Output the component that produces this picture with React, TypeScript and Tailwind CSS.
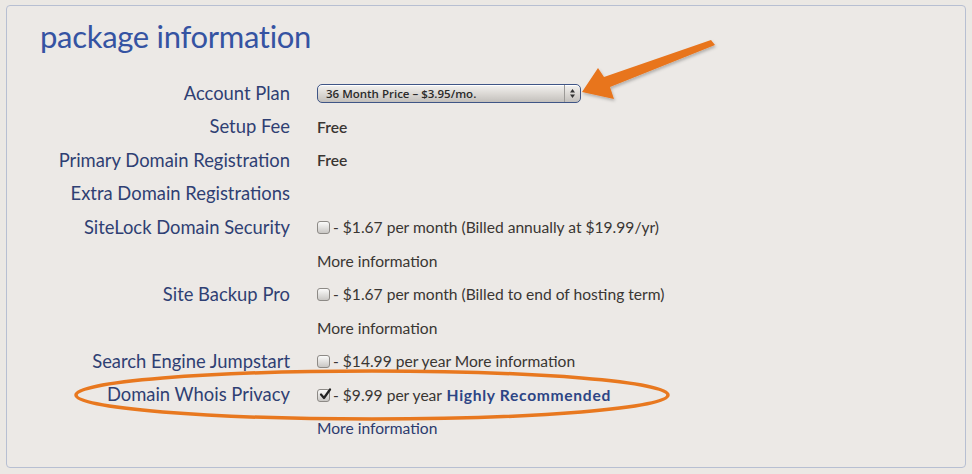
import React from "react";

const font = { fontFamily: "Lato, 'Open Sans', sans-serif" };

type Row = { label?: string; value?: React.ReactNode };

function Checkbox({ checked = false }: { checked?: boolean }) {
  return (
    <span className="relative inline-flex w-[13px] h-[13px] shrink-0 rounded-[3px] border border-[#8d8a86] bg-gradient-to-b from-[#fbfbfa] to-[#c9c7c4] items-center justify-center">
      {checked && (
        <svg width="13" height="13" viewBox="0 0 13 13" className="absolute left-[1px] -top-[2px]">
          <path d="M2 6.5 L5 10 L11 1.5" fill="none" stroke="#222" strokeWidth="2.2" strokeLinecap="round" strokeLinejoin="round" />
        </svg>
      )}
    </span>
  );
}

function Select() {
  return (
    <div className="flex items-center h-[19px] w-[264px] rounded-[5px] border border-[#3f5586] bg-gradient-to-b from-[#f3f2f0] via-[#dcd9d5] to-[#c3c0bc] shadow-[inset_0_1px_0_#fff]">
      <span
        className="flex-1 pl-[8px] text-[11.5px] font-semibold text-[#2a2a2a] leading-none"
        style={{ fontFamily: "'Open Sans', 'DejaVu Sans', sans-serif" }}
      >
        36 Month Price – $3.95/mo.
      </span>
      <span className="flex flex-col items-center justify-center w-[16px] h-full border-l border-[#9c9a97]">
        <svg width="7" height="11" viewBox="0 0 7 11">
          <path d="M3.5 1 L6 4.5 H1 Z" fill="#333" />
          <path d="M3.5 10 L6 6.5 H1 Z" fill="#333" />
        </svg>
      </span>
    </div>
  );
}

const price = (text: string, extra?: React.ReactNode, checked = false) => (
  <span className="flex items-center gap-[3px]">
    <Checkbox checked={checked} />
    <span>
      - {text}
      {extra}
    </span>
  </span>
);

const rows: Row[] = [
  { label: "Account Plan", value: <Select /> },
  { label: "Setup Fee", value: <span className="font-semibold">Free</span> },
  { label: "Primary Domain Registration", value: <span className="font-semibold">Free</span> },
  { label: "Extra Domain Registrations" },
  { label: "SiteLock Domain Security", value: price("$1.67 per month (Billed annually at $19.99/yr)") },
  { value: "More information" },
  { label: "Site Backup Pro", value: price("$1.67 per month (Billed to end of hosting term)") },
  { value: "More information" },
  { label: "Search Engine Jumpstart", value: price("$14.99 per year", " More information") },
  {
    label: "Domain Whois Privacy",
    value: price(
      "$9.99 per year",
      <span className="font-bold text-[#2d4585] tracking-[0.7px]"> Highly Recommended</span>,
      true
    ),
  },
  { value: <span className="text-[#2d3b6e]">More information</span> },
];

export default function App() {
  return (
    <div className="relative w-[972px] h-[474px] bg-[#ebe8e4] pt-[5px] px-[6px] overflow-hidden" style={font}>
      <div className="h-[463px] rounded-[4px] border border-[#b7bfd2] bg-[#ece9e6]">
        <h1 className="pl-[33px] pt-[10px] text-[31px] font-normal leading-[40px] text-[#3553a2] tracking-[-0.3px]">
          package information
        </h1>
        <div className="mt-[21px] grid grid-cols-[283px_1fr] gap-x-[27px]">
          {rows.map((r, i) => (
            <React.Fragment key={i}>
              <div className="h-[33.5px] flex items-center justify-end text-[18.4px] text-[#2f3f73]">
                {r.label}
              </div>
              <div className="h-[33.5px] flex items-center text-[15.6px] text-[#3a3633]">{r.value}</div>
            </React.Fragment>
          ))}
        </div>
      </div>

      <svg className="absolute inset-0 pointer-events-none" width="972" height="474">
        <defs>
          <filter id="sh" x="-10%" y="-10%" width="120%" height="140%">
            <feDropShadow dx="1" dy="2" stdDeviation="1.5" floodColor="#000" floodOpacity="0.25" />
          </filter>
        </defs>
        <path
          d="M711 40 L715 45 L610 87 L614 99 L582 92 L598 68 L604 77 Z"
          fill="#e8741d"
          filter="url(#sh)"
        />
        <ellipse cx="372" cy="395" rx="296" ry="24" fill="none" stroke="#e8781f" strokeWidth="3.5" />
      </svg>
    </div>
  );
}
